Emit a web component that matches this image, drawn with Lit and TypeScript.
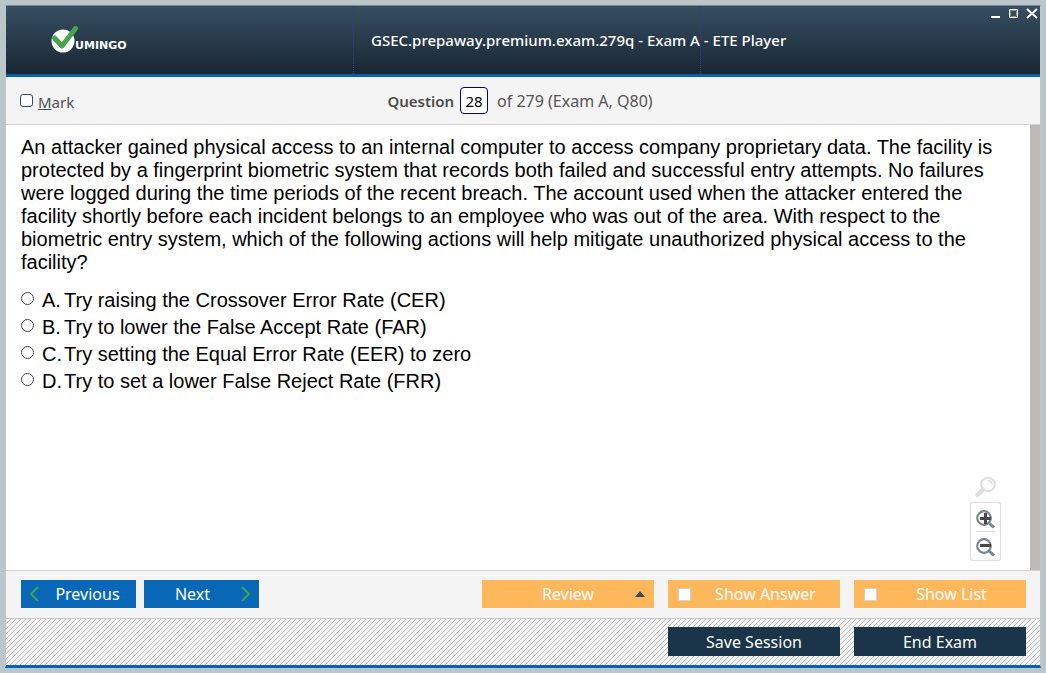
import { LitElement, html, css, svg } from "lit";
import { customElement, property, state } from "lit/decorators.js";

const checkIcon = svg`<path d="M3.500 12 L11 20 L24.500 2.500" fill="none" stroke="#45a549" stroke-width="5" stroke-linecap="round" stroke-linejoin="round"/>`;

@customElement("title-bar")
export class TitleBar extends LitElement {
  @property() heading = "";

  static styles = css`
    :host { display: block; }
    .bar {
      display: grid;
      grid-template-columns: 1fr 1fr 340px;
      height: 68px;
      background: linear-gradient(#374f62, #192633);
      border-bottom: 3px solid #0462b3;
      color: #fff;
    }
    .cell { display: flex; align-items: center; min-width: 0; }
    .cell + .cell { border-left: 1px dotted #2f3f90; }
    .brand { padding-left: 45px; }
    .logo { display: block; width: 28px; height: 28px; }
    .name {
      font: 700 11px/12px "DejaVu Sans", sans-serif;
      margin-top: 12px;
      margin-left: -4px;
    }
    .heading {
      margin: 0;
      padding-left: 17px;
      font: 500 15px/20px "Noto Sans", sans-serif;
      white-space: nowrap;
    }
    .controls {
      align-items: flex-start;
      justify-content: flex-end;
      gap: 6px;
      padding: 2px 2px 0 0;
    }
    .control { width: 12px; height: 12px; padding: 0; border: 0; background: none; color: #fff; }
    .control svg { display: block; }
  `;

  render() {
    return html`
      <header class="bar">
        <div class="cell brand">
          <svg class="logo" viewBox="0 0 28 28" aria-hidden="true">
            <circle cx="12" cy="15" r="11.5" fill="#fff"/>
            ${checkIcon}
          </svg>
          <span class="name">UMINGO</span>
        </div>
        <div class="cell"><h1 class="heading">${this.heading}</h1></div>
        <div class="cell controls">
          <button class="control" aria-label="Minimize"><svg width="12" height="12"><path d="M1 9h9" stroke="#fff" stroke-width="2"/></svg></button>
          <button class="control" aria-label="Maximize"><svg width="12" height="12"><path d="M1.500 1.500h8v8h-8z" fill="none" stroke="#fff"/><path d="M2.500 2.500h6v6h-6z" fill="none" stroke="#8b8b85"/></svg></button>
          <button class="control" aria-label="Close"><svg width="12" height="12"><path d="M1 1l10 9M11 1L1 10" stroke="#fff" stroke-width="2"/></svg></button>
        </div>
      </header>
    `;
  }
}

@customElement("zoom-tools")
export class ZoomTools extends LitElement {
  static styles = css`
    :host { display: flex; flex-direction: column; align-items: center; gap: 4px; width: 31px; }
    .tool { display: block; padding: 0; border: 0; background: none; }
    .tool svg { display: block; }
    .group {
      box-sizing: border-box;
      width: 31px;
      padding: 4px 5px 2px;
      background: #fff;
      border: 1px solid #dedede;
      border-radius: 3px;
      box-shadow: 0 0 1px #ddd;
    }
    .group .tool { box-sizing: border-box; height: 24px; }
    .group .tool + .tool { height: 27px; border-top: 1px solid #ddd; padding-top: 4px; }
  `;

  render() {
    return html`
      <button class="tool" aria-label="Reset zoom">
        <svg width="22" height="22" fill="none" stroke="#dedede" stroke-width="2">
          <circle cx="13" cy="8.500" r="6.800"/>
          <path d="M12.500 4.500q4 0 4.500 4" stroke-width="1.500"/>
          <path d="M8 13.500L2.500 19" stroke-width="4" stroke-linecap="round"/>
        </svg>
      </button>
      <div class="group">
        <button class="tool" aria-label="Zoom in">
          <svg width="19" height="21" fill="none" stroke="#778692">
            <circle cx="8" cy="9" r="6.800" stroke-width="2.200"/>
            <path d="M13 14l5 4.500" stroke-width="3"/>
            <path d="M4 9.500h11M9.500 4v11" stroke="#484848" stroke-width="3"/>
          </svg>
        </button>
        <button class="tool" aria-label="Zoom out">
          <svg width="19" height="21" fill="none" stroke="#778692">
            <circle cx="8" cy="9" r="6.800" stroke-width="2.200"/>
            <path d="M13 14l5 4.500" stroke-width="3"/>
            <path d="M4 8.500h11" stroke="#484848" stroke-width="3"/>
          </svg>
        </button>
      </div>
    `;
  }
}

@customElement("app-root")
export class AppRoot extends LitElement {
  @state() private answer = "";

  private question =
    "An attacker gained physical access to an internal computer to access company proprietary data. The facility is protected by a fingerprint biometric system that records both failed and successful entry attempts. No failures were logged during the time periods of the recent breach. The account used when the attacker entered the facility shortly before each incident belongs to an employee who was out of the area. With respect to the biometric entry system, which of the following actions will help mitigate unauthorized physical access to the facility?";

  private options = [
    { key: "A", text: "Try raising the Crossover Error Rate (CER)" },
    { key: "B", text: "Try to lower the False Accept Rate (FAR)" },
    { key: "C", text: "Try setting the Equal Error Rate (EER) to zero" },
    { key: "D", text: "Try to set a lower False Reject Rate (FRR)" },
  ];

  static styles = css`
    :host { display: block; }
    * { box-sizing: border-box; }
    .desktop { height: 100vh; padding: 5px; background: #b9c6cc; }
    .window {
      display: flex;
      flex-direction: column;
      height: 100%;
      border: 1px solid #c4c6c6;
      border-top-color: #7d898d;
      border-bottom: 3px solid #0462b3;
      background: #f4f4f4;
    }
    .status {
      display: grid;
      grid-template-columns: 1fr auto 1fr;
      align-items: center;
      height: 48px;
      padding: 0 20px 0 14px;
      border-bottom: 1px solid #d2d2d2;
      font: 16px/20px "Noto Sans", sans-serif;
      color: #555;
    }
    .mark { display: flex; align-items: center; gap: 5px; color: #4a5055; font-size: 15px; padding-top: 2px; }
    .mark-box {
      appearance: none;
      width: 13px;
      height: 13px;
      margin: 0 0 2px;
      border: 1px solid #34495a;
      border-radius: 3px;
      background: #fff;
    }
    .position { display: flex; align-items: center; }
    .position-label { font-weight: 600; font-size: 15px; color: #4d4d4d; }
    .position-input {
      width: 28px;
      height: 27px;
      margin: 0 9px 0 6px;
      padding: 0;
      border: 1px solid #000080;
      border-radius: 4px;
      background: #fff;
      color: #000;
      font: 15px/20px "Noto Sans", sans-serif;
      text-align: center;
    }
    .body { flex: 1; min-height: 0; display: flex; background: #fff; border-bottom: 1px solid #d2d2d2; }
    .content {
      flex: 1;
      position: relative;
      padding: 11px 15px 0;
      font: 20px/23px "Liberation Sans", Arial, sans-serif;
      color: #000;
    }
    .question { margin: 0 0 13px; }
    .options { margin: 0; padding: 0; border: 0; }
    .option { display: flex; height: 27px; align-items: center; }
    .radio {
      appearance: none;
      width: 13px;
      height: 13px;
      margin: 0 8px 4px 0;
      border: 1px solid #444;
      border-radius: 50%;
      background: #fff;
    }
    .key { width: 22px; }
    .track { width: 10px; background: #bbbab6; }
    .zoom { position: absolute; right: 29px; bottom: 9px; }
    .actions, .session { display: flex; padding: 8px 14px 0 15px; }
    .actions { height: 48px; padding-top: 9px; border-bottom: 1px solid #c9c9c9; gap: 8px; }
    .session {
      height: 46px;
      gap: 14px;
      justify-content: flex-end;
      background: linear-gradient(135deg, #f4f4f4 45%, #bdbdbd 45% 55%, #f4f4f4 55%) 0 0 / 5px 5px;
    }
    .button {
      display: flex;
      align-items: center;
      height: 28px;
      padding: 0;
      border: 0;
      color: #fff;
      font: 16px/20px "Noto Sans", sans-serif;
    }
    .caption { flex: 1; text-align: center; }
    .nav { width: 115px; background: #0868b7; }
    .back { padding-left: 8px; }
    .forward { padding-right: 8px; }
    .amber { width: 172px; background: #ffb75c; }
    .dark { width: 172px; height: 29px; background: #1a3449; }
    .group { display: flex; gap: 14px; margin-left: auto; }
    .review { padding-left: 24px; }
    .check {
      appearance: none;
      width: 13px;
      height: 13px;
      margin: 0 0 0 10px;
      border: 1px solid #d0d3d6;
      background: #fff;
    }
  `;

  private choose(key: string) {
    this.answer = key;
  }

  render() {
    return html`
      <div class="desktop">
        <main class="window">
          <title-bar heading="GSEC.prepaway.premium.exam.279q - Exam A - ETE Player"></title-bar>
          <div class="status">
            <label class="mark"><input class="mark-box" type="checkbox" /><span><u>M</u>ark</span></label>
            <div class="position">
              <label class="position-label" for="number">Question</label>
              <input class="position-input" id="number" type="text" .value=${"28"} />
              <span>of 279 (Exam A, Q80)</span>
            </div>
          </div>
          <div class="body">
            <section class="content">
              <p class="question">${this.question}</p>
              <fieldset class="options" aria-label="Answers">
                ${this.options.map(
                  (o) => html`<label class="option">
                    <input class="radio" type="radio" name="answer" .checked=${this.answer === o.key} @change=${() => this.choose(o.key)} />
                    <span class="key">${o.key}.</span><span>${o.text}</span>
                  </label>`
                )}
              </fieldset>
              <zoom-tools class="zoom"></zoom-tools>
            </section>
            <div class="track"></div>
          </div>
          <div class="actions">
            <button class="button nav back">
              <svg width="10" height="16" fill="none" stroke="#3fa648" stroke-width="2"><path d="M9 1L2 8l7 7"/></svg>
              <span class="caption">Previous</span>
            </button>
            <button class="button nav forward">
              <span class="caption">Next</span>
              <svg width="10" height="16" fill="none" stroke="#3fa648" stroke-width="2"><path d="M1 1l7 7-7 7"/></svg>
            </button>
            <div class="group">
              <button class="button amber review">
                <span class="caption">Review</span>
                <svg width="24" height="6"><path d="M5 6l5-6 5 6z" fill="#2f4a5e"/></svg>
              </button>
              <label class="button amber"><input class="check" type="checkbox" /><span class="caption">Show Answer</span></label>
              <label class="button amber"><input class="check" type="checkbox" /><span class="caption">Show List</span></label>
            </div>
          </div>
          <div class="session">
            <button class="button dark"><span class="caption">Save Session</span></button>
            <button class="button dark"><span class="caption">End Exam</span></button>
          </div>
        </main>
      </div>
    `;
  }
}
